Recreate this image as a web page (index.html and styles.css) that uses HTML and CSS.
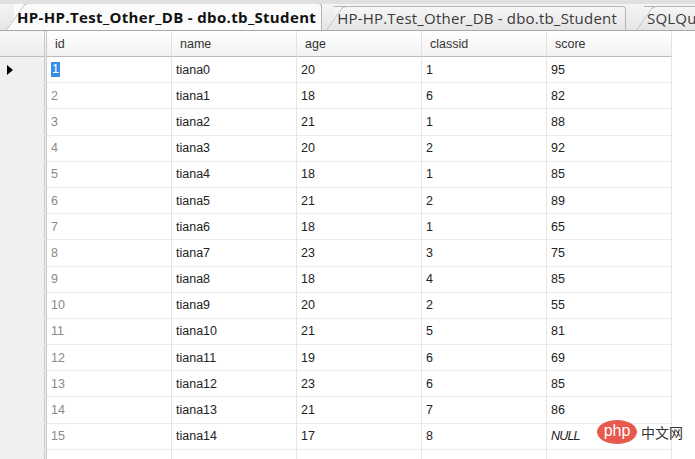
FILE: index.html
```html
<!DOCTYPE html>
<html>
<head>
<meta charset="utf-8">
<link rel="stylesheet" href="styles.css">
</head>
<body>
<div class="tabs">
  <div class="tab active"><span>HP-HP.Test_Other_DB - dbo.tb_Student</span></div>
  <div class="tab"><span>HP-HP.Test_Other_DB - dbo.tb_Student</span></div>
  <div class="tab last"><span>SQLQuery1.sql</span></div>
</div>
<div class="grid">
  <div class="rh corner"></div>
  <div class="hc">id</div><div class="hc">name</div><div class="hc">age</div><div class="hc">classid</div><div class="hc">score</div><div class="pad"></div>

  <div class="rh"><span class="arrow"></span></div><div class="c id"><span class="sel">1</span></div><div class="c">tiana0</div><div class="c">20</div><div class="c">1</div><div class="c">95</div><div class="pad"></div>
  <div class="rh"></div><div class="c id">2</div><div class="c">tiana1</div><div class="c">18</div><div class="c">6</div><div class="c">82</div><div class="pad"></div>
  <div class="rh"></div><div class="c id">3</div><div class="c">tiana2</div><div class="c">21</div><div class="c">1</div><div class="c">88</div><div class="pad"></div>
  <div class="rh"></div><div class="c id">4</div><div class="c">tiana3</div><div class="c">20</div><div class="c">2</div><div class="c">92</div><div class="pad"></div>
  <div class="rh"></div><div class="c id">5</div><div class="c">tiana4</div><div class="c">18</div><div class="c">1</div><div class="c">85</div><div class="pad"></div>
  <div class="rh"></div><div class="c id">6</div><div class="c">tiana5</div><div class="c">21</div><div class="c">2</div><div class="c">89</div><div class="pad"></div>
  <div class="rh"></div><div class="c id">7</div><div class="c">tiana6</div><div class="c">18</div><div class="c">1</div><div class="c">65</div><div class="pad"></div>
  <div class="rh"></div><div class="c id">8</div><div class="c">tiana7</div><div class="c">23</div><div class="c">3</div><div class="c">75</div><div class="pad"></div>
  <div class="rh"></div><div class="c id">9</div><div class="c">tiana8</div><div class="c">18</div><div class="c">4</div><div class="c">85</div><div class="pad"></div>
  <div class="rh"></div><div class="c id">10</div><div class="c">tiana9</div><div class="c">20</div><div class="c">2</div><div class="c">55</div><div class="pad"></div>
  <div class="rh"></div><div class="c id">11</div><div class="c">tiana10</div><div class="c">21</div><div class="c">5</div><div class="c">81</div><div class="pad"></div>
  <div class="rh"></div><div class="c id">12</div><div class="c">tiana11</div><div class="c">19</div><div class="c">6</div><div class="c">69</div><div class="pad"></div>
  <div class="rh"></div><div class="c id">13</div><div class="c">tiana12</div><div class="c">23</div><div class="c">6</div><div class="c">85</div><div class="pad"></div>
  <div class="rh"></div><div class="c id">14</div><div class="c">tiana13</div><div class="c">21</div><div class="c">7</div><div class="c">86</div><div class="pad"></div>
  <div class="rh"></div><div class="c id">15</div><div class="c">tiana14</div><div class="c">17</div><div class="c">8</div><div class="c null">NULL</div><div class="pad"></div>
  <div class="rh"></div><div class="c"></div><div class="c"></div><div class="c"></div><div class="c"></div><div class="c"></div><div class="pad"></div>
</div>
<div class="watermark"><span class="php">php</span><span class="cn">中文网</span></div>
</body>
</html>
```

FILE: styles.css
```css
html, body {
  margin: 0;
  padding: 0;
  background: #ffffff;
  overflow: hidden;
  width: 695px;
  height: 459px;
}
body {
  font-family: "Liberation Sans", "Noto Sans CJK SC", sans-serif;
}
.tabs {
  height: 31px;
  box-sizing: border-box;
  background: linear-gradient(#f4f4f4, #e6e6e6);
  border-top: 4px solid #e0e0e0;
  border-bottom: 1px solid #a8a8a8;
  display: flex;
  align-items: flex-end;
  padding-left: 8px;
  gap: 6px;
  overflow: hidden;
  white-space: nowrap;
}
.tab {
  position: relative;
  flex: none;
  height: 24px;
  box-sizing: border-box;
  border: 1px solid #b4b4b4;
  border-bottom: none;
  border-left: none;
  border-radius: 0 4px 0 0;
  background: linear-gradient(#f7f7f7, #e4e4e4);
  padding: 1px 8px 0 3px;
  font-family: "Open Sans", sans-serif;
  font-size: 15px;
  line-height: 21px;
  color: #333;
  letter-spacing: 0.2px;
  margin-left: 6px;
}
.tab::before {
  content: "";
  position: absolute;
  left: -8px;
  top: -1px;
  bottom: 0;
  width: 14px;
  border-left: 1px solid #b4b4b4;
  border-top: 1px solid #b4b4b4;
  border-radius: 4px 0 0 0;
  background: inherit;
  transform: skewX(-35deg);
  transform-origin: bottom left;
  z-index: -1;
}
.tab span { position: relative; }
.tab.active {
  height: 27px;
  padding-top: 3px;
  padding-right: 5px;
  background: #fbfbfb;
  font-weight: bold;
  color: #111;
  z-index: 2;
  letter-spacing: 0.35px;
}
.tab.active::before { background: #fbfbfb; }
.tabs .tab:not(.active) { z-index: 1; color: #3a3a3a; }
.tab.last { margin-left: 12px; }
.grid {
  display: grid;
  grid-template-columns: 47px repeat(5, 125px) 1fr;
  grid-template-rows: 26px repeat(16, 26.2px);
  font-family: "Liberation Sans", sans-serif;
  font-size: 12.5px;
  color: #222;
}
.rh {
  background: #f0f0f0;
  border-right: 3px double #c8c8c8;
  border-bottom: 1px solid #f0f0f0;
  display: flex;
  align-items: center;
  padding-left: 7px;
}
.rh.corner {
  background: linear-gradient(#f8f8f8, #ececec);
  border-bottom: 1px solid #bcbcbc;
}
.arrow {
  width: 0;
  height: 0;
  border-top: 5px solid transparent;
  border-bottom: 5px solid transparent;
  border-left: 6px solid #000;
}
.hc {
  background: linear-gradient(#ffffff, #f2f2f2);
  border-right: 1px solid #e2e2e2;
  border-bottom: 1px solid #bcbcbc;
  padding-left: 8px;
  display: flex;
  align-items: center;
  color: #333;
}
.pad { background: #fff; }
.c {
  border-right: 1px solid #e6e6e6;
  border-bottom: 1px solid #ececec;
  padding-left: 4px;
  display: flex;
  align-items: center;
}
.c.id { color: #8a8a8a; }
.sel {
  background: #3a8ee6;
  color: #fff;
  padding: 0 1px;
  line-height: 15px;
}
.c.null {
  font-style: italic;
  letter-spacing: -0.8px;
}
.watermark {
  position: absolute;
  left: 597px;
  top: 420px;
  display: flex;
  align-items: center;
  gap: 4px;
}
.php {
  background: #e8594d;
  color: #fff;
  border-radius: 50%;
  width: 40px;
  height: 24px;
  display: flex;
  align-items: center;
  justify-content: center;
  font-family: "Liberation Sans", sans-serif;
  font-size: 16px;
  line-height: 1;
  padding-bottom: 2px;
  box-sizing: border-box;
}
.cn {
  font-family: "Noto Sans CJK SC", sans-serif;
  font-size: 14px;
  color: #333;
}
```
